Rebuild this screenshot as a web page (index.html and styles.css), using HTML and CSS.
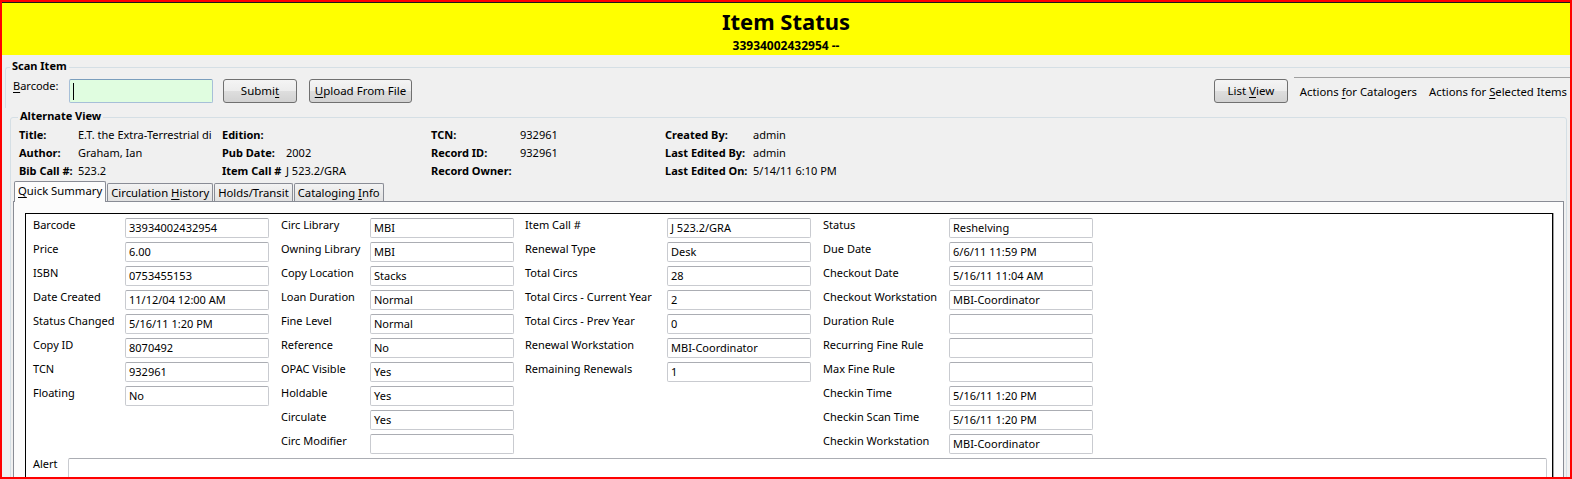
FILE: index.html
```html
<!DOCTYPE html>
<html>
<head>
<meta charset="utf-8">
<title>Item Status</title>
<link rel="stylesheet" href="styles.css">
</head>
<body>
<div class="window">
  <header class="banner">
    <h1 class="banner-title">Item Status</h1>
    <div class="banner-sub">33934002432954 --</div>
  </header>

  <fieldset class="group scan">
    <legend class="group-title">Scan Item</legend>
    <div class="scan-row">
      <label class="scan-label"><u>B</u>arcode:</label>
      <div class="barcode-input"><span class="caret"></span></div>
      <button class="btn btn-submit">Submi<u>t</u></button>
      <button class="btn btn-upload"><u>U</u>pload From File</button>
      <div class="scan-right">
        <button class="btn btn-list">List <u>V</u>iew</button>
        <nav class="menubar">
          <span class="menu-item">Actions <u>f</u>or Catalogers</span>
          <span class="menu-item last">Actions for <u>S</u>elected Items</span>
        </nav>
      </div>
    </div>
  </fieldset>

  <fieldset class="group alt">
    <legend class="group-title">Alternate View</legend>
    <div class="details">
      <span class="dl">Title:</span><span class="dv">E.T. the Extra-Terrestrial di</span>
      <span class="dl">Edition:</span><span class="dv"></span>
      <span class="dl">TCN:</span><span class="dv">932961</span>
      <span class="dl">Created By:</span><span class="dv">admin</span>

      <span class="dl">Author:</span><span class="dv">Graham, Ian</span>
      <span class="dl">Pub Date:</span><span class="dv">2002</span>
      <span class="dl">Record ID:</span><span class="dv">932961</span>
      <span class="dl">Last Edited By:</span><span class="dv">admin</span>

      <span class="dl">Bib Call #:</span><span class="dv">523.2</span>
      <span class="dl">Item Call #</span><span class="dv">J 523.2/GRA</span>
      <span class="dl">Record Owner:</span><span class="dv"></span>
      <span class="dl">Last Edited On:</span><span class="dv">5/14/11 6:10 PM</span>
    </div>

    <div class="tabs">
      <div class="tab active"><u>Q</u>uick Summary</div>
      <div class="tab">Circulation <u>H</u>istory</div>
      <div class="tab">Holds/Transit</div>
      <div class="tab">Cataloging <u>I</u>nfo</div>
    </div>

    <div class="tabpanel">
      <div class="summary">
        <div class="cols">
          <div class="col col1">
            <span class="fl">Barcode</span><span class="fv">33934002432954</span>
            <span class="fl">Price</span><span class="fv">6.00</span>
            <span class="fl">ISBN</span><span class="fv">0753455153</span>
            <span class="fl">Date Created</span><span class="fv">11/12/04 12:00 AM</span>
            <span class="fl">Status Changed</span><span class="fv">5/16/11 1:20 PM</span>
            <span class="fl">Copy ID</span><span class="fv">8070492</span>
            <span class="fl">TCN</span><span class="fv">932961</span>
            <span class="fl">Floating</span><span class="fv">No</span>
          </div>
          <div class="col col2">
            <span class="fl">Circ Library</span><span class="fv">MBI</span>
            <span class="fl">Owning Library</span><span class="fv">MBI</span>
            <span class="fl">Copy Location</span><span class="fv">Stacks</span>
            <span class="fl">Loan Duration</span><span class="fv">Normal</span>
            <span class="fl">Fine Level</span><span class="fv">Normal</span>
            <span class="fl">Reference</span><span class="fv">No</span>
            <span class="fl">OPAC Visible</span><span class="fv">Yes</span>
            <span class="fl">Holdable</span><span class="fv">Yes</span>
            <span class="fl">Circulate</span><span class="fv">Yes</span>
            <span class="fl">Circ Modifier</span><span class="fv"></span>
          </div>
          <div class="col col3">
            <span class="fl">Item Call #</span><span class="fv">J 523.2/GRA</span>
            <span class="fl">Renewal Type</span><span class="fv">Desk</span>
            <span class="fl">Total Circs</span><span class="fv">28</span>
            <span class="fl">Total Circs - Current Year</span><span class="fv">2</span>
            <span class="fl">Total Circs - Prev Year</span><span class="fv">0</span>
            <span class="fl">Renewal Workstation</span><span class="fv">MBI-Coordinator</span>
            <span class="fl">Remaining Renewals</span><span class="fv">1</span>
          </div>
          <div class="col col4">
            <span class="fl">Status</span><span class="fv">Reshelving</span>
            <span class="fl">Due Date</span><span class="fv">6/6/11 11:59 PM</span>
            <span class="fl">Checkout Date</span><span class="fv">5/16/11 11:04 AM</span>
            <span class="fl">Checkout Workstation</span><span class="fv">MBI-Coordinator</span>
            <span class="fl">Duration Rule</span><span class="fv"></span>
            <span class="fl">Recurring Fine Rule</span><span class="fv"></span>
            <span class="fl">Max Fine Rule</span><span class="fv"></span>
            <span class="fl">Checkin Time</span><span class="fv">5/16/11 1:20 PM</span>
            <span class="fl">Checkin Scan Time</span><span class="fv">5/16/11 1:20 PM</span>
            <span class="fl">Checkin Workstation</span><span class="fv">MBI-Coordinator</span>
          </div>
        </div>
        <div class="alert-row">
          <span class="alert-label">Alert</span>
          <div class="alert-input"></div>
        </div>
      </div>
    </div>
  </fieldset>
</div>
</body>
</html>
```
FILE: styles.css
```css
* { box-sizing: border-box; }
html, body { margin: 0; padding: 0; background: #fff; }
body {
  font-family: "Noto Sans", "Open Sans", sans-serif;
  font-size: 11px;
  color: #000;
}
u { text-decoration: underline; text-underline-offset: 2px; }

.window {
  width: 1572px;
  height: 479px;
  border: 2px solid #ff0000;
  background: #f0f0f0;
  overflow: hidden;
}

/* Banner */
.banner {
  background: #ffff00;
  border-top: 1px solid #1a1a1a;
  height: 53px;
  padding-top: 5px;
  text-align: center;
}
.banner-title {
  margin: 0;
  font-size: 22px;
  line-height: 26px;
  font-weight: 700;
}
.banner-sub {
  margin-top: 4px;
  font-size: 12px;
  line-height: 16px;
  font-weight: 700;
}

/* Group boxes */
.group {
  margin: 0;
  padding: 0;
  min-width: 0;
  border: 1px solid #d5dfe5;
  border-radius: 3px;
}
.group-title {
  padding: 0 2px 2px;
  font-weight: 700;
  font-size: 11px;
  line-height: 16px;
}
.scan {
  margin: 3px 0 0 3px;
  border-right: none;
  border-bottom: none;
  border-radius: 3px 0 0 0;
  padding: 3px 0 5px 0;
}
.scan .group-title { margin-left: 4px; }

.scan-row {
  display: flex;
  align-items: flex-start;
  padding-left: 7px;
  height: 24px;
}
.scan-label {
  width: 56px;
  line-height: 14px;
  font-size: 11px;
}
.barcode-input {
  width: 144px;
  height: 24px;
  border: 1px solid #a7bfd8;
  border-top-color: #7b9ebd;
  border-radius: 2px;
  background: #e0fde0;
  padding: 3px 0 0 3px;
}
.caret {
  display: block;
  width: 1px;
  height: 17px;
  background: #000;
}

.btn {
  height: 24px;
  border: 1px solid #707070;
  border-radius: 3px;
  background: linear-gradient(#f4f4f4 0%, #ececec 50%, #dedede 50%, #d2d2d2 100%);
  font-family: "Noto Sans", "Open Sans", sans-serif;
  font-size: 11.5px;
  line-height: 22px;
  color: #000;
  padding: 0;
  text-align: center;
}
.btn-submit { width: 74px; margin-left: 10px; }
.btn-upload { width: 103px; margin-left: 12px; }
.btn-list { width: 74px; }

.scan-right {
  margin-left: auto;
  display: flex;
  align-items: flex-start;
}
.menubar {
  display: flex;
  margin-left: 6px;
  margin-top: -2px;
  height: 26px;
  border-top: 1px solid #a0a0a0;
  padding-top: 6px;
  font-size: 11.3px;
  line-height: 16px;
}
.menu-item { padding: 0 6px; white-space: nowrap; }
.menu-item.last { padding-right: 3px; }

/* Alternate view */
.alt {
  margin: 0 3px 0 8px;
  padding: 0 2px;
}
.alt .group-title { margin-left: 5px; }

.details {
  display: grid;
  grid-template-columns: 59px 144px 64px 145px 89px 145px 88px 1fr;
  grid-auto-rows: 18px;
  margin-left: 6px;
  line-height: 18px;
}
.dl { font-weight: 700; white-space: nowrap; }
.dv { white-space: nowrap; }

/* Tabs */
.tabs {
  display: flex;
  align-items: flex-end;
  gap: 1px;
  margin-top: 1px;
  padding-left: 1px;
  position: relative;
  z-index: 1;
}
.tab {
  height: 18px;
  border: 1px solid #898c95;
  border-bottom: none;
  border-radius: 2px 2px 0 0;
  padding: 1px 3px 0;
  font-size: 11.3px;
  line-height: 16px;
  white-space: nowrap;
  background: linear-gradient(#f3f3f3, #e1e1e1);
}
.tab.active {
  height: 21px;
  margin-bottom: -1px;
  background: #fcfcfc;
}
.tabpanel {
  border: 1px solid #898c95;
  background: #fcfcfc;
  padding: 11px 10px 0 11px;
}

.summary {
  background: #fff;
  border: 1px solid #000;
  box-shadow: 1px 0 0 #a0a0a0;
  padding: 4px 5px 0 7px;
  height: 300px;
}
.cols {
  display: flex;
  align-items: flex-start;
}
.col {
  display: grid;
  grid-auto-rows: 20px;
  row-gap: 4px;
}
.col1 { grid-template-columns: 92px 144px; }
.col2 { grid-template-columns: 101px 144px; }
.col3 { grid-template-columns: 153px 144px; }
.col4 { grid-template-columns: 138px 144px; }
.col2 .fl, .col4 .fl { padding-left: 12px; }
.col3 .fl { padding-left: 11px; }

.fl {
  line-height: 14px;
  white-space: nowrap;
}
.fv {
  border: 1px solid #c9cbd0;
  border-top-color: #abadb3;
  border-radius: 2px;
  background: #fff;
  padding: 2px 3px 0;
  line-height: 14px;
  white-space: nowrap;
  overflow: hidden;
}

.alert-row {
  display: flex;
  align-items: flex-start;
  margin-top: 4px;
}
.alert-label {
  width: 35px;
  line-height: 14px;
  margin-top: -1px;
}
.alert-input {
  flex: 1;
  height: 40px;
  border: 1px solid #c9cbd0;
  border-top-color: #abadb3;
  border-radius: 2px;
  background: #fff;
}
```
